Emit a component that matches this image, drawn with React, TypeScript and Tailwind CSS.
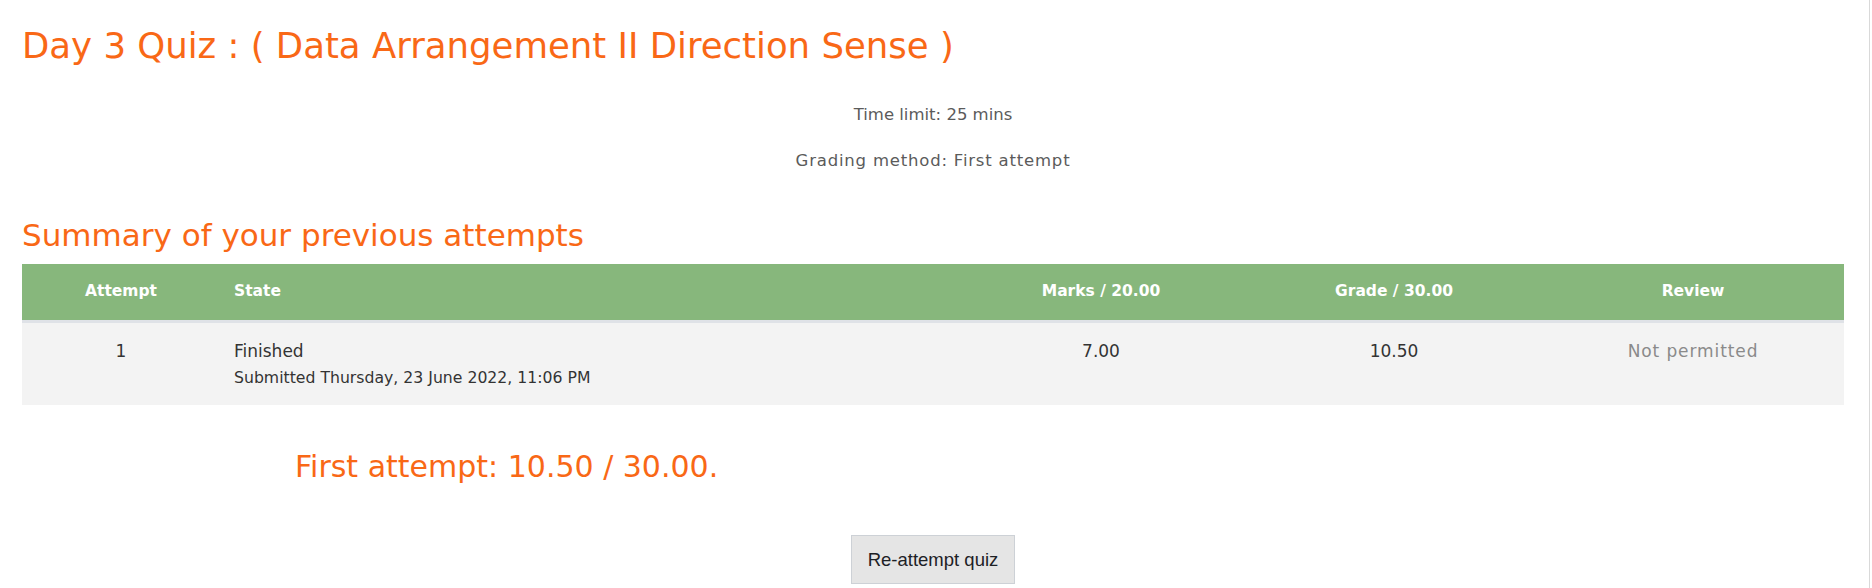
export default function App() {
  return (
    <div className="flex w-[1872px] h-[588px] overflow-hidden bg-white font-['DejaVu_Sans',sans-serif]">
      <main className="w-[1869px] shrink-0 pl-[22px] pr-[25px]">
        <h2 className="mt-[22px] h-[48px] leading-[48px] text-[35.5px] text-[#f96816] font-normal whitespace-nowrap">
          Day 3 Quiz : ( Data Arrangement II Direction Sense )
        </h2>
        <p className="mt-[33px] h-[24px] leading-[24px] text-center text-[16.5px] text-[#5b5b5b]">
          Time limit: 25 mins
        </p>
        <p className="mt-[22px] h-[24px] leading-[24px] text-center text-[16.5px] tracking-[0.8px] text-[#5b5b5b]">
          Grading method: First attempt
        </p>
        <h3 className="mt-[42px] h-[40px] leading-[40px] text-[31px] text-[#f96816] font-normal whitespace-nowrap">
          Summary of your previous attempts
        </h3>
        <div className="mt-[9px]">
          <div className="grid grid-cols-[198px_736px_290px_296px_302px] h-[59px] items-center bg-[#87b77c] border-b-[3px] border-[#dfe2e7] text-white font-bold text-[15.5px]">
            <div className="text-center">Attempt</div>
            <div className="pl-[14px]">State</div>
            <div className="text-center">Marks / 20.00</div>
            <div className="text-center">Grade / 30.00</div>
            <div className="text-center">Review</div>
          </div>
          <div className="grid grid-cols-[198px_736px_290px_296px_302px] items-start bg-[#f3f3f3] pt-[16px] pb-[16px] text-[17px] text-[#333333]">
            <div className="text-center leading-[24px]">1</div>
            <div className="pl-[14px]">
              <div className="leading-[24px]">Finished</div>
              <div className="mt-[4px] leading-[22px] text-[15.7px]">Submitted Thursday, 23 June 2022, 11:06 PM</div>
            </div>
            <div className="text-center leading-[24px]">7.00</div>
            <div className="text-center leading-[24px]">10.50</div>
            <div className="text-center leading-[24px] tracking-[0.9px] text-[#8a8a8a]">Not permitted</div>
          </div>
        </div>
        <div className="mt-[42px] pl-[273px] h-[40px] leading-[40px] text-[30px] text-[#f96816] whitespace-nowrap">
          First attempt: 10.50 / 30.00.
        </div>
        <div className="mt-[48px] flex justify-center">
          <button className="h-[49px] px-[16px] bg-[#e5e5e5] border border-[#cdd1d6] text-[18.5px] font-['Liberation_Sans',Arial,sans-serif] text-[#1d2125]">
            Re-attempt quiz
          </button>
        </div>
      </main>
      <div className="w-px shrink-0 bg-[#d9d9d9]" />
      <div className="w-[2px] shrink-0 bg-white" />
    </div>
  );
}
